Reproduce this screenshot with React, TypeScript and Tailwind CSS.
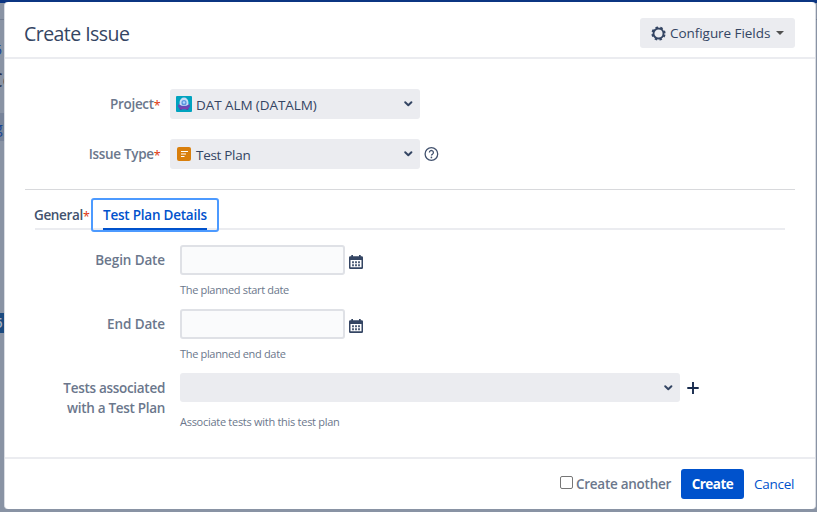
import React from "react";

const Chevron = () => (
  <svg width="10" height="8" viewBox="0 0 10 8" fill="none" stroke="#344563" strokeWidth="2" strokeLinecap="round" strokeLinejoin="round">
    <path d="M2.200 2.300 5.300 5.200 8.400 2.300" />
  </svg>
);

const Calendar = () => (
  <svg width="14" height="14" viewBox="0 0 14 14">
    <path fill="#344563" fillRule="evenodd" d="M2.300 0h1.700v1.200h6V0h1.700v1.200h1A1.300 1.300 0 0 1 14 2.500v10.200a1.300 1.300 0 0 1-1.300 1.300H1.300A1.300 1.300 0 0 1 0 12.700V2.500a1.300 1.300 0 0 1 1.300-1.300h1zM1.500 5v7.300h11V5z" />
    <path fill="#344563" fillOpacity=".85" d="M3 6.200h2v2H3zM6 6.200h2v2H6zM9 6.200h2v2H9zM3 9.200h2v2H3zM6 9.200h2v2H6zM9 9.200h2v2H9z" />
  </svg>
);

const Gear = () => (
  <svg width="15" height="15" viewBox="0 0 15 15" fill="none" stroke="#344563">
    <circle cx="7.500" cy="7.500" r="5" strokeWidth="1.900" />
    <circle cx="7.500" cy="7.500" r="6.200" strokeWidth="1.800" strokeDasharray="2.500 2.370" strokeDashoffset="-1.100" />
  </svg>
);

const ProjectAvatar = () => (
  <svg width="16" height="16" viewBox="0 0 16 16">
    <rect width="16" height="16" rx="1" fill="#00A3BF" />
    <rect x="3.500" y="11" width="2.500" height="3" rx="1" fill="#5243AA" />
    <rect x="10" y="11" width="2.500" height="3" rx="1" fill="#5243AA" />
    <ellipse cx="8" cy="10" rx="6.200" ry="3.200" fill="#5E4DB8" />
    <path d="M3 11.200h10L11 13.200H5z" fill="#8040B0" />
    <path d="M3.600 8.700V6a4.400 4.400 0 0 1 8.800 0v2.700Q8 11.500 3.600 8.700z" fill="#C8DCF5" />
    <circle cx="8" cy="6.700" r="2.600" fill="#5C96DF" />
    <circle cx="8" cy="6.500" r="1.200" fill="#B3D4FF" />
  </svg>
);

const TestPlanIcon = () => (
  <svg width="14" height="14" viewBox="0 0 14 14">
    <rect width="14" height="14" rx="2" fill="#D97F0C" />
    <path d="M4 4.500h7M4 7h5M4 9.500h3.500" stroke="#fff" strokeWidth="1.100" />
  </svg>
);

const Help = () => (
  <svg width="15" height="14" viewBox="0 0 15 14" fill="none" stroke="#42526E">
    <circle cx="7.400" cy="7" r="6.300" strokeWidth="1.300" />
    <path d="M5.400 5.500a2 2 0 1 1 3.200 1.600C7.800 7.600 7.400 7.900 7.400 8.600" strokeWidth="1.300" />
    <circle cx="7.400" cy="10.400" r=".85" fill="#42526E" stroke="none" />
  </svg>
);

const Star = () => <span className="relative top-px text-[12.500px] leading-none font-normal tracking-[-0.7px] text-[#DE350B]">*</span>;

function DateField({ label, help }: { label: string; help: string }) {
  return (
    <div className="flex h-16">
      <div className="w-[160px] pt-[5px] text-right leading-5 font-semibold tracking-[-0.12px] text-[#6B778C]">{label}</div>
      <div className="ml-[15px]">
        <div className="flex">
          <input aria-label={label} className="h-[30px] w-[165px] rounded-[3px] border-2 border-[#DFE1E6] bg-[#FAFBFC]" />
          <div className="ml-1 pt-[10px]"><Calendar /></div>
        </div>
        <p className="mt-[7px] text-[11px] leading-4 tracking-[-0.33px] text-[#6B778C]">{help}</p>
      </div>
    </div>
  );
}

export default function App() {
  return (
    <div className="relative h-[512px] w-[817px] overflow-hidden bg-[#8993A4] font-['Open_Sans','Noto_Sans',sans-serif] text-[13.500px] leading-5 text-[#344563]">
      <div className="h-[3px] bg-[#0B3582]" />
      <div className="absolute top-[19px] left-0 h-px w-full bg-[#727D91]" />
      <div className="absolute top-[40px] left-[-6px] text-[14px] text-[#164596]">5</div>
      <div className="absolute top-[70px] left-[-10px] text-[20px] text-[#1C2B49]">Co</div>
      <div className="absolute top-[113px] left-0 h-[28px] w-1 bg-[#778399]" />
      <div className="absolute top-[118px] left-[-5px] text-[14px] text-[#164596]">g</div>
      <div className="absolute top-[313px] left-0 h-5 w-1 overflow-hidden bg-[#1B4A80]"><span className="ml-[-5px] font-semibold text-[#A5B1C2]">5</span></div>
      <main className="absolute top-[2px] left-1 flex h-[507px] w-[812px] flex-col rounded-[4px] border-x border-[#DADDE3] bg-white">
        <header className="flex h-[57px] shrink-0 items-center justify-between border-b-2 border-[#EBECF0] pr-5 pl-5">
          <h1 className="-ml-px pt-[9px] text-[19.500px] leading-6 tracking-[-0.55px] text-[#344563]">Create Issue</h1>
          <button className="mt-[7px] flex h-[30px] w-[155px] items-center rounded-[3px] bg-[#EBECF0] pl-[11px]">
            <Gear />
            <span className="ml-1 w-[100px] tracking-[-0.05px] whitespace-nowrap text-left">Configure Fields</span>
            <svg className="ml-1.5" width="8" height="4" viewBox="0 0 8 4"><path d="M0 0h8L4 4z" fill="#505050" /></svg>
          </button>
        </header>
        <section className="flex-1 px-5 pt-[30px]">
          <div className="flex h-[50px]">
            <div className="w-[135px] pt-[5px] text-right font-semibold tracking-[-0.3px] text-[#6B778C]">Project<Star /></div>
            <div className="ml-[10px] flex h-[30px] w-[250px] items-center rounded-[3px] bg-[#EBECF0] pr-[7px] pl-1.5">
              <ProjectAvatar /><span className="mt-[2px] ml-1 flex-1 tracking-[-0.08px]">DAT ALM (DATALM)</span><Chevron />
            </div>
          </div>
          <div className="flex h-[50px]">
            <div className="w-[135px] pt-[5px] text-right font-semibold tracking-[-0.3px] text-[#6B778C]">Issue Type<Star /></div>
            <div className="ml-[10px] flex h-[30px] w-[250px] items-center rounded-[3px] bg-[#EBECF0] pr-[7px] pl-[7px]">
              <TestPlanIcon /><span className="mt-[2px] ml-[5px] flex-1 tracking-[-0.3px]">Test Plan</span><Chevron />
            </div>
            <div className="ml-1 pt-2"><Help /></div>
          </div>
          <div className="h-px bg-[#D8D9DC]" />
          <nav className="mx-[10px] mt-2 flex h-8 border-b-2 border-[#EBECF0]">
            <div className="w-[56px] pt-[7px] font-semibold tracking-[-0.35px] whitespace-nowrap text-[#42526E]"><span className="-ml-px">General</span><Star /></div>
            <div className="z-10 h-[34px] w-[128px] rounded-[3px] border-2 border-[#4C9AFF] px-[10px] pt-[5px]">
              <div className="h-[25px] border-b-2 border-[#0052CC] font-semibold tracking-[-0.23px] whitespace-nowrap text-[#0052CC]">Test Plan Details</div>
            </div>
          </nav>
          <div className="-ml-5 pt-[15px]">
            <DateField label="Begin Date" help="The planned start date" />
            <DateField label="End Date" help="The planned end date" />
            <div className="flex">
              <div className="w-[160px] pt-[5px] text-right font-semibold tracking-[-0.3px] text-[#6B778C]">Tests associated<br />with a Test Plan</div>
              <div className="ml-[15px]">
                <div className="flex items-center">
                  <div className="flex h-[29px] w-[500px] items-center justify-end rounded-[3px] bg-[#EBECF0] pr-[7px]"><Chevron /></div>
                  <svg className="ml-[6.500px]" width="12" height="12" viewBox="0 0 12 12"><path d="M6 0v12M.3 6h11.400" stroke="#172B4D" strokeWidth="1.900" /></svg>
                </div>
                <p className="mt-3 text-[11px] leading-4 tracking-[-0.28px] text-[#6B778C]">Associate tests with this test plan</p>
              </div>
            </div>
          </div>
        </section>
        <footer className="flex h-[52px] shrink-0 items-center border-t-2 border-[#EBECF0] pl-[555px]">
          <span className="mb-[3px] h-[13px] w-[13px] rounded-[2px] border border-[#767676] bg-white" />
          <span className="ml-[3px] w-[105px] font-semibold tracking-[-0.27px] whitespace-nowrap text-[#6B778C]">Create another</span>
          <button className="h-[30px] w-[63px] rounded-[3px] bg-[#0052CC] font-bold tracking-[-0.5px] text-white">Create</button>
          <a className="ml-[10px] tracking-[-0.25px] text-[#0052CC]">Cancel</a>
        </footer>
      </main>
    </div>
  );
}
